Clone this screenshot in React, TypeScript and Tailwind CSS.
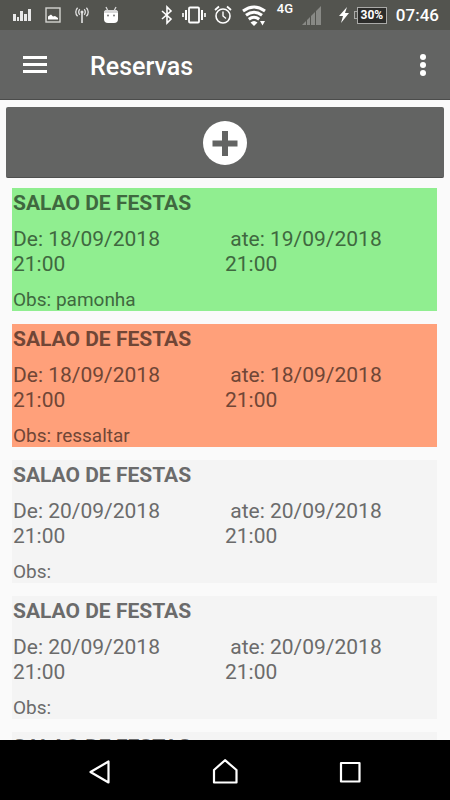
import React from 'react';

interface Reservation {
    id: number;
    place: string;
    from: string;
    to: string;
    time: string;
    note: string;
    color: string;
}

const reservations: Reservation[] = [
    { id: 1, place: 'SALAO DE FESTAS', from: '18/09/2018', to: '19/09/2018', time: '21:00', note: 'pamonha', color: 'bg-[#90ee90] text-[#3f683f]' },
    { id: 2, place: 'SALAO DE FESTAS', from: '18/09/2018', to: '18/09/2018', time: '21:00', note: 'ressaltar', color: 'bg-[#ffa07a] text-[#704636]' },
    { id: 3, place: 'SALAO DE FESTAS', from: '20/09/2018', to: '20/09/2018', time: '21:00', note: '', color: 'bg-[#f4f4f4] text-[#6b6b6b]' },
    { id: 4, place: 'SALAO DE FESTAS', from: '20/09/2018', to: '20/09/2018', time: '21:00', note: '', color: 'bg-[#f4f4f4] text-[#6b6b6b]' },
    { id: 5, place: 'SALAO DE FESTAS', from: '21/09/2018', to: '21/09/2018', time: '21:00', note: '', color: 'bg-[#f4f4f4] text-[#6b6b6b]' },
];

const StatusBar: React.FC = () => (
    <div className="flex h-[30px] shrink-0 items-center justify-between bg-[#53544f] pl-[13px] pr-[11px] text-white">
        <div className="flex items-center gap-[14px]">
            <svg className="h-5 w-[18px]" viewBox="0 0 18 20" fill="#e8e8e8">
                <path d="M0 9h3v7H0zM4 12h2v4H4zM7 6h3v10H7zM11 9h3v7h-3zM15 4h3v12h-3z" />
            </svg>
            <svg className="h-4 w-4" viewBox="0 0 16 16">
                <rect x="1" y="1" width="14" height="14" fill="none" stroke="#d4d4d0" strokeWidth="1.4" />
                <path d="M3 12.500V9.500L6 7.500l2 2 2-.5 3 2v1.500z" fill="#fff" />
            </svg>
            <svg className="h-4 w-[14px]" viewBox="0 0 14 16" fill="none" stroke="#e4e4e4" strokeWidth="1.3">
                <path d="M7 5v11" strokeWidth="1.6" />
                <circle cx="7" cy="5" r="1.500" fill="#e4e4e4" stroke="none" />
                <path d="M4.800 2.300a3.800 3.800 0 0 0 0 5.400M9.200 2.300a3.800 3.800 0 0 1 0 5.400M2.600.7a6 6 0 0 0 0 8.600M11.400.7a6 6 0 0 1 0 8.600" />
            </svg>
            <svg className="h-[18px] w-4" viewBox="0 0 16 18">
                <path d="M3 1l2 4M13 1l-2 4" stroke="#d8d8d8" strokeWidth="1.300" />
                <path d="M1 7q0-3 3-3h8q3 0 3 3v6q0 4-4 4H5q-4 0-4-4z" fill="#fff" />
                <path d="M1 7q0-3 3-3h8q3 0 3 3z" fill="#d8d8d8" />
                <circle cx="5" cy="9.500" r="1" fill="#777" />
                <circle cx="11" cy="9.500" r="1" fill="#777" />
            </svg>
        </div>
        <div className="flex items-center">
            <svg className="h-5 w-3" viewBox="0 0 12 20" fill="none" stroke="#fff" strokeWidth="1.600">
                <path d="M1 6l9 8-4 4V2l4 4-9 8" />
            </svg>
            <svg className="ml-[9px] h-[18px] w-6" viewBox="0 0 24 18" fill="none" stroke="#fff">
                <rect x="7" y="1.500" width="10" height="15" rx="1" strokeWidth="1.800" />
                <path d="M4 4v10M20 4v10" strokeWidth="2" />
                <path d="M1 7v4M23 7v4" strokeWidth="1.600" />
            </svg>
            <svg className="ml-2 h-5 w-[18px]" viewBox="0 0 18 20" fill="none" stroke="#fff" strokeWidth="1.600">
                <circle cx="9" cy="11" r="7" />
                <path d="M9 6.500V11l3 2.500" strokeWidth="1.400" />
                <path d="M1 5l4-3.500M17 5l-4-3.500" strokeWidth="1.800" />
            </svg>
            <svg className="ml-[10px] h-[22px] w-6" viewBox="0 0 24 22" fill="none" stroke="#fff" strokeWidth="3">
                <path d="M1 7q11-8 22 0M4 11.300q8-6 16 0M6.800 15.300q5.200-4 10.400 0" />
                <path d="M8.500 18.500q3.500-3 7 0L12 22z" fill="#fff" stroke="none" />
                <path d="M18 17h5l-2.500 4.500z" fill="#fff" stroke="none" />
            </svg>
            <span className="ml-[11px] mb-3 w-[17px] text-[13px] leading-4 font-medium">4G</span>
            <svg className="ml-2 h-5 w-[19px]" viewBox="0 0 19 20" fill="#888985">
                <path d="M0 20l4-4v4zM5 15l3-3v8H5zM9 11l4-4v13H9zM14 6l5-5v19h-5z" />
            </svg>
            <svg className="ml-[18px] h-4 w-[10px]" viewBox="0 0 10 16" fill="#fff">
                <path d="M8 0L0 9h4l-2 7 8-10H6z" />
            </svg>
            <div className="ml-[5px] flex items-center">
                <span className="h-2 w-[3px] border border-r-0 border-[#aaaaa8]"></span>
                <span className="flex h-[17px] w-[30px] items-center justify-center border border-[#aaaaa8] bg-[#2c2c2a] text-[12px] font-bold">30%</span>
            </div>
            <span className="ml-[9px] text-[17px] leading-6 font-medium">07:46</span>
        </div>
    </div>
);

const Header: React.FC = () => (
    <header className="flex h-[70px] shrink-0 items-center border-b border-[#4b4c4b] bg-[#636463] pr-6 pl-[23px] text-white">
        <button type="button" aria-label="Menu" className="flex flex-col gap-1">
            <span className="h-[3px] w-6 bg-white"></span>
            <span className="h-[3px] w-6 bg-white"></span>
            <span className="h-[3px] w-6 bg-white"></span>
        </button>
        <h1 className="ml-[43px] flex-1 pt-1 text-[25px] leading-8 font-medium">Reservas</h1>
        <button type="button" aria-label="Mais opções" className="flex flex-col gap-[2px]">
            <span className="size-[6px] rounded-full bg-white"></span>
            <span className="size-[6px] rounded-full bg-white"></span>
            <span className="size-[6px] rounded-full bg-white"></span>
        </button>
    </header>
);

const ReservationCard: React.FC<{ item: Reservation }> = ({ item }) => (
    <li className={`pt-[3px] pl-px ${item.color}`}>
        <h2 className="text-[21px] leading-[25px] font-bold">{item.place}</h2>
        <div className="mt-[11px] grid grid-cols-2 text-[21px] leading-[25px]">
            <p>
                De: {item.from}
                <br />
                {item.time}
            </p>
            <p className="whitespace-pre-wrap">
                {' ate: '}{item.to}
                <br />
                {item.time}
            </p>
        </div>
        <p className="mt-3 text-[19px] leading-[22px]">Obs: {item.note}</p>
    </li>
);

const NavBar: React.FC = () => (
    <nav className="flex h-[60px] shrink-0 items-center justify-center gap-[99px] bg-black text-white">
        <button type="button" aria-label="Voltar">
            <svg className="h-7 w-[26px]" viewBox="0 0 26 28" fill="none" stroke="currentColor" strokeWidth="2.200" strokeLinejoin="round">
                <path d="M21.500 5.500v21L3.500 16z" />
            </svg>
        </button>
        <button type="button" aria-label="Início">
            <svg className="h-7 w-[26px]" viewBox="0 0 26 28" fill="none" stroke="currentColor" strokeWidth="2.200" strokeLinejoin="round">
                <path d="M2 26.500V14L13 4.200 24.500 14v12.500z" />
            </svg>
        </button>
        <button type="button" aria-label="Recentes">
            <svg className="h-7 w-[26px]" viewBox="0 0 26 28" fill="none" stroke="currentColor" strokeWidth="2.200" strokeLinejoin="round">
                <rect x="4" y="7" width="18.500" height="18.500" />
            </svg>
        </button>
    </nav>
);

const App: React.FC = () => {
    return (
        <div className="flex h-screen flex-col bg-[#fafafa] font-['Roboto',sans-serif]">
            <StatusBar />
            <Header />
            <main className="min-h-0 flex-1 overflow-y-auto [scrollbar-width:none]">
                <div className="px-[6px] pt-[7px]">
                    <button
                        type="button"
                        aria-label="Nova reserva"
                        className="flex h-[71px] w-full items-center justify-center rounded-[2px] border-b border-[#4e4f4e] bg-[#636463] pt-px"
                    >
                        <svg className="size-11" viewBox="0 0 44 44">
                            <circle cx="22" cy="22" r="22" fill="#fff" />
                            <path d="M19 10h6v9.500h9.500v6H25V35h-6v-9.500H9.500v-6H19z" fill="#636463" />
                        </svg>
                    </button>
                </div>
                <ul className="mt-[10px] flex flex-col gap-[13px] pr-[13px] pl-3">
                    {reservations.map(item => (
                        <ReservationCard key={item.id} item={item} />
                    ))}
                </ul>
            </main>
            <NavBar />
        </div>
    );
};

export default App;
